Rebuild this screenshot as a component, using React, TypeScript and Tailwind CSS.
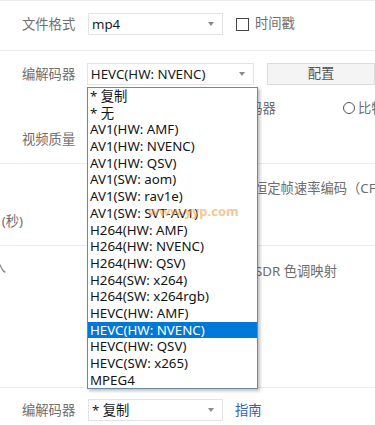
import React from 'react';

const codecs = [
  '* 复制',
  '* 无',
  'AV1(HW: AMF)',
  'AV1(HW: NVENC)',
  'AV1(HW: QSV)',
  'AV1(SW: aom)',
  'AV1(SW: rav1e)',
  'AV1(SW: SVT-AV1)',
  'H264(HW: AMF)',
  'H264(HW: NVENC)',
  'H264(HW: QSV)',
  'H264(SW: x264)',
  'H264(SW: x264rgb)',
  'HEVC(HW: AMF)',
  'HEVC(HW: NVENC)',
  'HEVC(HW: QSV)',
  'HEVC(SW: x265)',
  'MPEG4',
];

const Arrow: React.FC = () => (
  <svg width="6" height="4" viewBox="0 0 6 4" className="shrink-0">
    <polygon points="0,0 6,0 3,4" fill="#8a8a8a" />
  </svg>
);

const Select: React.FC<{ value: string; width: string }> = ({ value, width }) => (
  <div className={`${width} h-[22px] flex items-center justify-between border border-[#e3e3e3] bg-white pl-[3px] pr-[8px] text-[#1a1a1a]`}>
    <span className="whitespace-nowrap leading-[20px]">{value}</span>
    <Arrow />
  </div>
);

const App: React.FC = () => {
  const selected = 'HEVC(HW: NVENC)';

  return (
    <div className="relative w-[375px] h-[425px] overflow-hidden bg-white text-[13.3px] font-['Noto_Sans','Noto_Sans_CJK_SC',sans-serif] text-[#6e6e6e]">
      {/* 文件格式 */}
      <div className="h-[51px] border-t border-b border-[#ececec] pt-[12px] pl-[22px] flex items-start">
        <span className="w-[66px] leading-[22px]">文件格式</span>
        <Select value="mp4" width="w-[135px]" />
        <div className="ml-[13px] h-[22px] flex items-center">
          <span className="w-[13px] h-[13px] border border-[#444] bg-white" />
          <span className="ml-[6px]">时间戳</span>
        </div>
      </div>

      {/* 编解码器 / 视频质量 */}
      <div className="h-[113px] border-b border-[#ececec] pt-[12px]">
        <div className="pl-[22px] flex items-start">
          <span className="w-[66px] leading-[22px]">编解码器</span>
          <Select value={selected} width="w-[170px]" />
          <div className="ml-[13px] w-[108px] h-[22px] shrink-0 flex items-center justify-center border border-[#dcdcdc] bg-[#f4f4f4] text-[#555]">
            配置
          </div>
        </div>
        <div className="mt-[15px] pl-[236px] flex items-center leading-[16px] whitespace-nowrap">
          <span>编码器</span>
          <span className="ml-[67px] w-[12px] h-[12px] rounded-full border border-[#555] shrink-0" />
          <span className="ml-[3px]">比特率</span>
        </div>
        <div className="mt-[15px] pl-[22px] leading-[16px]">视频质量</div>
      </div>

      {/* 帧率 */}
      <div className="h-[82px] border-b border-[#ececec] pt-[16px]">
        <div className="pl-[254px] leading-[16px] whitespace-nowrap">恒定帧速率编码（CFR）</div>
        <div className="mt-[17px] w-[23px] flex justify-end leading-[16px] whitespace-nowrap">
          <span>(秒)</span>
        </div>
      </div>

      {/* 色调映射 */}
      <div className="h-[142px] border-b border-[#ececec] pt-[17px] flex items-start leading-[16px] whitespace-nowrap">
        <div className="w-[6px] flex justify-end -mt-[4px]">
          <span>输入</span>
        </div>
        <span className="ml-[249px]">SDR 色调映射</span>
      </div>

      {/* 音频编解码器 */}
      <div className="pt-[11px] pl-[22px] flex items-start">
        <span className="w-[66px] leading-[22px]">编解码器</span>
        <Select value="* 复制" width="w-[135px]" />
        <span className="ml-[12px] leading-[22px] text-[#2c5fb8]">指南</span>
      </div>

      {/* 下拉列表 */}
      <div className="absolute left-[87px] top-[87px] w-[171px] border border-[#6b8aa4] bg-white shadow-[2px_2px_3px_rgba(0,0,0,0.25)] text-[#141414]">
        {codecs.map(c => (
          <div
            key={c}
            className={`h-[16.7px] leading-[16.7px] pl-[2px] whitespace-nowrap ${c === selected ? 'bg-[#0078d7] text-white' : ''}`}
          >
            {c}
          </div>
        ))}
      </div>

      {/* 水印 */}
      <div className="absolute left-[148px] top-[203px] text-[13px] font-bold leading-[16px] text-[#f2a24f] opacity-60 whitespace-nowrap">
        www.yyp.com
      </div>
    </div>
  );
};

export default App;
